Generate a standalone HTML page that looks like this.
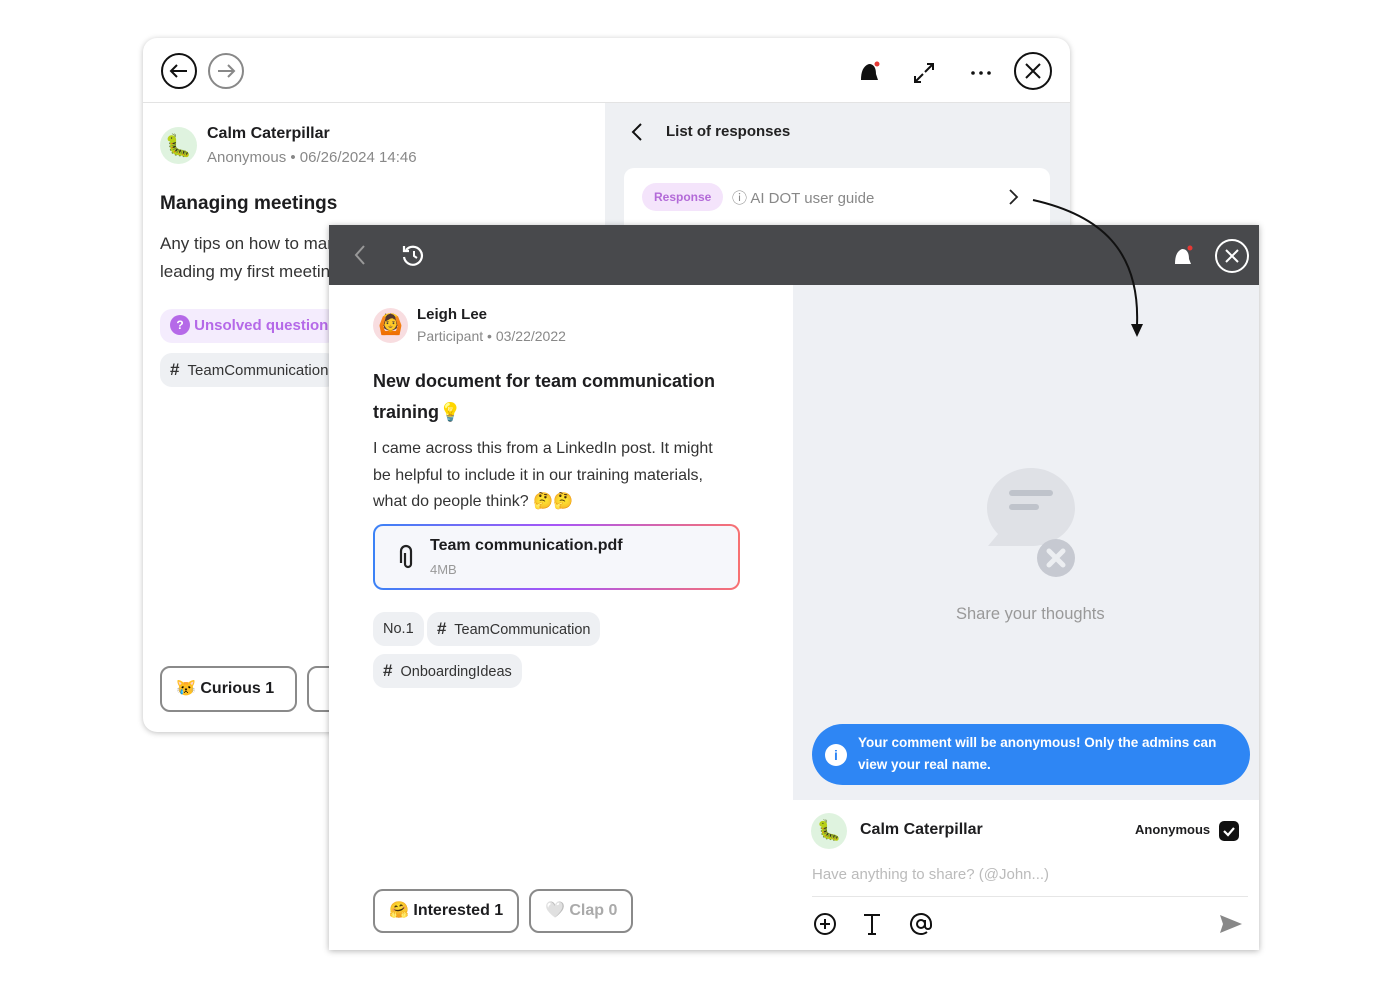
<!DOCTYPE html>
<html><head><meta charset="utf-8"><style>
*{box-sizing:border-box;margin:0;padding:0}
body{width:1400px;height:989px;background:#fff;font-family:"Liberation Sans","Noto Sans CJK SC",sans-serif;position:relative;overflow:hidden;color:#1d1d1f}
.abs{position:absolute}
.back{left:143px;top:38px;width:927px;height:694px;border-radius:14px;background:#fff;box-shadow:0 1px 6px rgba(0,0,0,.25);overflow:hidden}
.front{left:329px;top:225px;width:930px;height:725px;background:#fff;box-shadow:0 1px 6px rgba(0,0,0,.3);overflow:hidden}
.chip{position:absolute;background:#eef0f3;border-radius:12px;font-size:14.5px;color:#333;height:34px;line-height:34px;padding:0 10px}
.btn{position:absolute;border:2px solid #8a8a8a;border-radius:10px;background:#fff;font-weight:bold;font-size:16px;height:46px;line-height:42px;padding:0 14px}
.av{position:absolute;border-radius:50%;text-align:center}
</style></head><body>
<div class="abs back">
 <div class="abs" style="left:0;top:0;width:927px;height:65px;border-bottom:1px solid #e3e3e3"></div>
 <svg class="abs" style="left:17px;top:14px" width="90" height="38"><circle cx="19" cy="19" r="17" fill="none" stroke="#111" stroke-width="2"/><path d="M27 19H11M17 13l-6 6 6 6" fill="none" stroke="#111" stroke-width="2"/><circle cx="66" cy="19" r="17" fill="none" stroke="#888" stroke-width="2"/><path d="M58 19h16M68 13l6 6-6 6" fill="none" stroke="#888" stroke-width="2"/></svg>
 <svg class="abs" style="left:714px;top:20px" width="150" height="30"><path d="M4 22c0-8 2-14 8-16 5 0 7 4 7 10l2 6z" fill="#111"/><circle cx="20" cy="6" r="2.5" fill="#e53935"/><path d="M58 24l8-8M58 18v6h6M76 6l-8 8M76 12V6h-6" fill="none" stroke="#111" stroke-width="2"/><circle cx="116" cy="15" r="1.8" fill="#111"/><circle cx="124" cy="15" r="1.8" fill="#111"/><circle cx="132" cy="15" r="1.8" fill="#111"/></svg>
 <svg class="abs" style="left:870px;top:13px" width="40" height="40"><circle cx="20" cy="20" r="18" fill="none" stroke="#111" stroke-width="2"/><path d="M13 13l14 14M27 13L13 27" stroke="#111" stroke-width="2"/></svg>
 <div class="abs" style="left:462px;top:65px;width:465px;height:629px;background:#eef0f3"></div>
 <div class="av" style="left:17px;top:89px;width:37px;height:37px;background:#dff3df;font-size:22px;line-height:37px">🐛</div>
 <div class="abs" style="left:64px;top:87px;font-size:16px;font-weight:bold">Calm Caterpillar</div>
 <div class="abs" style="left:64px;top:111px;font-size:15px;color:#888">Anonymous • 06/26/2024 14:46</div>
 <div class="abs" style="left:17px;top:155px;font-size:19px;font-weight:bold">Managing meetings</div>
 <div class="abs" style="left:17px;top:192px;font-size:17px;line-height:28px;color:#333">Any tips on how to manage<br>leading my first meeting</div>
 <div class="chip" style="left:17px;top:271px;background:#f4ecfd;color:#b569e8;font-weight:bold;font-size:15px;padding-left:10px"><span style="display:inline-block;width:20px;height:20px;border-radius:50%;background:#b569e8;color:#fff;text-align:center;line-height:20px;font-size:12px;vertical-align:middle;margin-top:-3px">?</span> Unsolved question</div>
 <div class="chip" style="left:17px;top:315px;font-size:15px"><b style="font-size:17px">#</b>&nbsp; TeamCommunication</div>
 <div class="btn" style="left:17px;top:628px;width:137px">😿 Curious 1</div>
 <div class="btn" style="left:164px;top:628px;width:60px"></div>
 <svg class="abs" style="left:485px;top:84px" width="20" height="20"><path d="M13 2L5 10l8 8" fill="none" stroke="#111" stroke-width="2"/></svg>
 <div class="abs" style="left:523px;top:85px;font-size:15px;font-weight:bold;color:#222">List of responses</div>
 <div class="abs" style="left:481px;top:130px;width:426px;height:80px;background:#fff;border-radius:10px"></div>
 <div class="abs" style="left:499px;top:145px;height:28px;line-height:28px;padding:0 12px;border-radius:14px;background:#f4e4fb;color:#b36ad8;font-size:12px;font-weight:bold">Response</div>
 <div class="abs" style="left:589px;top:149px;font-size:15px;color:#888">ⓘ AI DOT user guide</div>
 <svg class="abs" style="left:863px;top:150px" width="14" height="18"><path d="M4 2l7 7-7 7" fill="none" stroke="#222" stroke-width="1.8"/></svg>
</div>

<div class="abs front">
 <div class="abs" style="left:0;top:0;width:930px;height:60px;background:#48494c"></div>
 <svg class="abs" style="left:20px;top:18px" width="30" height="26"><path d="M15 3L7 12l8 9" fill="none" stroke="#999" stroke-width="2"/></svg>
 <svg class="abs" style="left:71px;top:17px" width="28" height="28"><path d="M6 8a9 9 0 1 1-2 7" fill="none" stroke="#fff" stroke-width="2.2"/><path d="M4 4v5h5" fill="none" stroke="#fff" stroke-width="2.2"/><path d="M14 9v5l3 2" fill="none" stroke="#fff" stroke-width="2"/></svg>
 <svg class="abs" style="left:843px;top:17px" width="24" height="28"><path d="M3 22c0-8 2-13 7-15 5 0 7 4 7 10l2 5z" fill="#fff"/><circle cx="18" cy="6" r="2.5" fill="#e53935"/></svg>
 <svg class="abs" style="left:885px;top:13px" width="36" height="36"><circle cx="18" cy="18" r="16" fill="none" stroke="#fff" stroke-width="2"/><path d="M12 12l12 12M24 12L12 24" stroke="#fff" stroke-width="2"/></svg>
 <div class="abs" style="left:464px;top:60px;width:466px;height:665px;background:#eef0f4"></div>
 <div class="av" style="left:44px;top:83px;width:35px;height:35px;background:#f8dde0;font-size:20px;line-height:35px">🙆</div>
 <div class="abs" style="left:88px;top:81px;font-size:15px;font-weight:bold">Leigh Lee</div>
 <div class="abs" style="left:88px;top:103px;font-size:14px;color:#888">Participant • 03/22/2022</div>
 <div class="abs" style="left:44px;top:141px;font-size:18px;font-weight:bold;line-height:31px;width:370px">New document for team communication training💡</div>
 <div class="abs" style="left:44px;top:211px;font-size:16px;line-height:26.5px;color:#333;width:356px">I came across this from a LinkedIn post. It might be helpful to include it in our training materials, what do people think? 🤔🤔</div>
 <div class="abs" style="left:44px;top:299px;width:367px;height:66px;border-radius:10px;padding:2px;background:linear-gradient(90deg,#3b82f6,#a855f7,#f87171)"><div style="width:100%;height:100%;background:#f6f7fb;border-radius:8px;position:relative">
  <svg class="abs" style="left:22px;top:18px" width="18" height="26"><path d="M6 8v11a3 3 0 0 0 6 0V6a5 5 0 0 0-10 0v12" fill="none" stroke="#222" stroke-width="2.2" transform="translate(2 1)"/></svg>
  <div class="abs" style="left:55px;top:11px;font-size:16px;font-weight:bold">Team communication.pdf</div>
  <div class="abs" style="left:55px;top:36px;font-size:13px;color:#999">4MB</div></div></div>
 <div class="chip" style="left:44px;top:387px">No.1</div>
 <div class="chip" style="left:98px;top:387px;padding:0 10px"><b style="font-size:17px">#</b>&nbsp; TeamCommunication</div>
 <div class="chip" style="left:44px;top:429px"><b style="font-size:17px">#</b>&nbsp; OnboardingIdeas</div>
 <div class="btn" style="left:44px;top:664px;height:44px;line-height:40px">🤗 Interested 1</div>
 <div class="btn" style="left:200px;top:664px;height:44px;line-height:40px;color:#aaa">🤍 Clap 0</div>
 <svg class="abs" style="left:656px;top:240px" width="92" height="115"><path d="M46 3c24 0 44 18 44 40s-20 38-44 38H3l10-12C6 62 2 53 2 43 2 21 22 3 46 3z" fill="#dfe1e6"/><rect x="24" y="25" width="44" height="6" rx="3" fill="#bfc3cb"/><rect x="24" y="39" width="30" height="6" rx="3" fill="#bfc3cb"/><circle cx="71" cy="93" r="19" fill="#c6c9d1"/><path d="M64 86l14 14M78 86L64 100" stroke="#eceef1" stroke-width="5" stroke-linecap="round"/></svg>
 <div class="abs" style="left:627px;top:380px;font-size:16.5px;color:#999">Share your thoughts</div>
 <div class="abs" style="left:483px;top:499px;width:438px;height:61px;border-radius:31px;background:#2e86f4;color:#fff;font-size:13.5px;font-weight:bold;line-height:22px;padding:8px 20px 0 46px">Your comment will be anonymous! Only the admins can view your real name.
  <div class="abs" style="left:13px;top:20px;width:22px;height:22px;border-radius:50%;background:#fff;color:#2e86f4;text-align:center;line-height:22px;font-size:14px">i</div></div>
 <div class="abs" style="left:464px;top:575px;width:466px;height:150px;background:#fff"></div>
 <div class="av" style="left:482px;top:588px;width:36px;height:36px;background:#dff3df;font-size:20px;line-height:36px">🐛</div>
 <div class="abs" style="left:531px;top:596px;font-size:16px;font-weight:bold">Calm Caterpillar</div>
 <div class="abs" style="left:806px;top:597px;font-size:13px;font-weight:bold">Anonymous</div>
 <svg class="abs" style="left:889px;top:595px" width="22" height="22"><rect x="1" y="1" width="20" height="20" rx="5" fill="#111"/><path d="M6 11l4 4 6-7" fill="none" stroke="#fff" stroke-width="2.2"/></svg>
 <div class="abs" style="left:483px;top:641px;font-size:15px;color:#bbb">Have anything to share? (@John...)</div>
 <div class="abs" style="left:483px;top:671px;width:436px;height:1px;background:#e6e6e6"></div>
 <svg class="abs" style="left:483px;top:685px" width="440" height="30"><circle cx="13" cy="14" r="10" fill="none" stroke="#111" stroke-width="2"/><path d="M13 9v10M8 14h10" stroke="#111" stroke-width="2"/><path d="M52 5h16M60 5v19M56 24h8" fill="none" stroke="#111" stroke-width="2"/><circle cx="109" cy="14" r="4" fill="none" stroke="#111" stroke-width="2"/><path d="M113 10v6a3 3 0 0 0 6 0v-2a10 10 0 1 0-4 8" fill="none" stroke="#111" stroke-width="2"/><path d="M408 5l22 9-22 9 3-9z" fill="#888"/></svg>
</div>
<svg class="abs" style="left:0;top:0" width="1400" height="989"><path d="M1033 200C1100 215 1140 250 1137 325" fill="none" stroke="#111" stroke-width="2"/><path d="M1131 324l6 13 6-13z" fill="#111"/></svg>
</body></html>
